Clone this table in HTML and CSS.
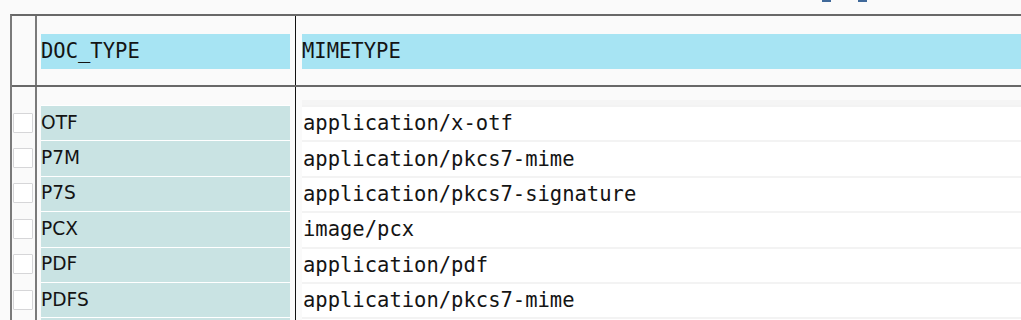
FILE: index.html
```html
<!DOCTYPE html>
<html lang="en">
<head>
    <meta charset="UTF-8">
    <title>DOC_TYPE / MIMETYPE</title>
    <link rel="stylesheet" href="styles.css">
</head>
<body>
    <div class="toolbar">
        <span class="tool"></span>
        <span class="tool"></span>
    </div>

    <div class="grid">
        <div class="row head">
            <div class="c0"></div>
            <div class="c1"><div class="label">DOC_TYPE</div></div>
            <div class="c2"><div class="label">MIMETYPE</div></div>
        </div>

        <div class="row spacer">
            <div class="c0"></div>
            <div class="c1"></div>
            <div class="c2"><div class="band"></div></div>
        </div>

        <div class="row item">
            <div class="c0"><span class="check"></span></div>
            <div class="c1"><div class="key">OTF</div></div>
            <div class="c2"><div class="value">application/x-otf</div></div>
        </div>
        <div class="row item">
            <div class="c0"><span class="check"></span></div>
            <div class="c1"><div class="key">P7M</div></div>
            <div class="c2"><div class="value">application/pkcs7-mime</div></div>
        </div>
        <div class="row item">
            <div class="c0"><span class="check"></span></div>
            <div class="c1"><div class="key">P7S</div></div>
            <div class="c2"><div class="value">application/pkcs7-signature</div></div>
        </div>
        <div class="row item">
            <div class="c0"><span class="check"></span></div>
            <div class="c1"><div class="key">PCX</div></div>
            <div class="c2"><div class="value">image/pcx</div></div>
        </div>
        <div class="row item">
            <div class="c0"><span class="check"></span></div>
            <div class="c1"><div class="key">PDF</div></div>
            <div class="c2"><div class="value">application/pdf</div></div>
        </div>
        <div class="row item">
            <div class="c0"><span class="check"></span></div>
            <div class="c1"><div class="key">PDFS</div></div>
            <div class="c2"><div class="value">application/pkcs7-mime</div></div>
        </div>
        <!-- next row only peeks in at the bottom edge -->
        <div class="row item">
            <div class="c0"></div>
            <div class="c1"><div class="key"></div></div>
            <div class="c2"><div class="value"></div></div>
        </div>
    </div>
</body>
</html>
```

FILE: styles.css
```css
* {
    margin: 0;
    padding: 0;
    box-sizing: border-box;
}
body {
    background: #fafafa;
    color: #141414;
    font-family: 'DejaVu Sans', sans-serif;
    width: 1021px;
    height: 320px;
    overflow: hidden;
}
.toolbar {
    display: flex;
    gap: 27px;
    height: 14px;
    padding-left: 822px;
}
.tool {
    width: 9px;
    height: 2px;
    background: #40699a;
}
.grid {
    margin-left: 10px;
    border-left: 2px solid #7a7a7a;
    border-top: 2px solid #686868;
}
.row {
    display: grid;
    grid-template-columns: 25px 259px 1fr;
}
.c0 {
    border-right: 2px solid #7a7a7a;
    display: flex;
    align-items: center;
    padding-left: 1px;
}
.c1 {
    border-right: 1px solid #111;
    padding: 0 5px 0 4px;
}
.c2 {
    padding-left: 6px;
}

/* header */
.head {
    height: 71px;
    border-bottom: 2px solid #686868;
}
.head .c1,
.head .c2 {
    padding-top: 18px;
    padding-bottom: 16px;
}
.label {
    height: 35px;
    background: #a7e4f3;
    display: flex;
    align-items: center;
    font-family: 'DejaVu Sans Mono', monospace;
    font-size: 20.5px;
    padding-bottom: 1px;
}

/* gap under the header */
.spacer {
    height: 18px;
}
.spacer .c2 {
    display: flex;
    align-items: flex-end;
}
.band {
    width: 100%;
    height: 5px;
    background: #f5f5f5;
}

/* body rows */
.item {
    height: 35.4px;
}
.check {
    width: 20px;
    height: 20px;
    background: #fff;
    border: 1px solid #d6d6d8;
    border-radius: 1px;
}
.key {
    height: 100%;
    background: #c9e3e3;
    border-top: 1px solid #fff;
    display: flex;
    align-items: center;
    font-size: 18.6px;
    padding-bottom: 2px;
}
.value {
    height: 100%;
    background: #fff;
    border-top: 2px solid #f3f3f3;
    display: flex;
    align-items: center;
    font-family: 'DejaVu Sans Mono', monospace;
    font-size: 20.5px;
    padding: 0 0 1px 1px;
}
```
